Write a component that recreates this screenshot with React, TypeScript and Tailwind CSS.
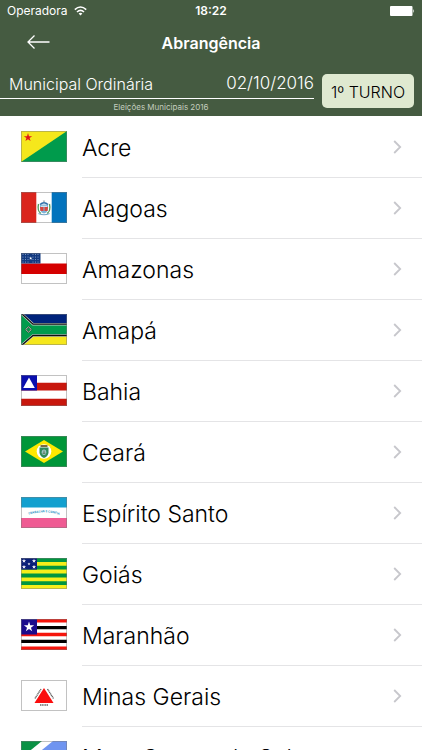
import React from "react";

const star = "M0 -1 L0.225 -0.309 L0.951 -0.309 L0.363 0.118 L0.588 0.809 L0 0.382 L-0.588 0.809 L-0.363 0.118 L-0.951 -0.309 L-0.225 -0.309 Z";

function Star({ x, y, r, fill }: { x: number; y: number; r: number; fill: string }) {
  return <path d={star} fill={fill} transform={`translate(${x} ${y}) scale(${r})`} />;
}

function Acre() {
  return (
    <>
      <rect width="46" height="31" fill="#f5e71c" />
      <path d="M0 31 L46 0 V31 Z" fill="#009b4c" />
      <Star x={7} y={6.5} r={4.4} fill="#e1151b" />
    </>
  );
}

function Alagoas() {
  return (
    <>
      <rect width="46" height="31" fill="#fff" />
      <rect width="15.3" height="31" fill="#da251d" />
      <rect x="30.7" width="15.3" height="31" fill="#0273bd" />
      <path d="M17.5 12 Q16 19 20 21.5 M28.5 12 Q30 19 26 21.5" fill="none" stroke="#4d9a5c" strokeWidth="1.3" />
      <path d="M19 12.5 h8 v5 q-1 3.5 -4 4 q-3 -.5 -4 -4 Z" fill="#7fb4d8" />
      <path d="M19 15 h3.5 v4 h-3 Z M23.5 15 h3.5 l-.5 4 h-3 Z" fill="#d8453d" />
      <path d="M19 12.5 q4 -3.5 8 0" fill="none" stroke="#2b6ea8" strokeWidth="1.6" />
      <path d="M20 14.3 h6" stroke="#fff" strokeWidth=".8" />
      <Star x={23} y={9.3} r={1.4} fill="#8a9fa8" />
      <path d="M17.5 21.5 q5.5 2.5 11 0" fill="none" stroke="#6fa3c4" strokeWidth="1.2" />
    </>
  );
}

function Amazonas() {
  const cols = [2, 4.5, 7, 12, 14.5, 17];
  return (
    <>
      <rect width="46" height="31" fill="#fff" />
      <rect y="10.5" width="46" height="10.5" fill="#d50000" />
      <rect width="19.5" height="10.5" fill="#123a80" />
      {[1.5, 4, 6.5, 9].map((y) =>
        cols.map((x) => <circle key={`${x}-${y}`} cx={x} cy={y} r=".5" fill="#9fb3d6" />)
      )}
      <Star x={9.7} y={5.2} r={1.8} fill="#fff" />
    </>
  );
}

function Amapa() {
  return (
    <>
      <rect width="46" height="31" fill="#009b4c" />
      <path d="M0 0 H46 V10 H12 Z" fill="#00237c" />
      <path d="M0 31 H46 V22 H12 Z" fill="#f5e71c" />
      <path d="M1 0 L12 10.2 H46 M1 31 L12 21.5 H46" fill="none" stroke="#c9d3d0" strokeWidth="2.4" />
      <path d="M1 0 L12 10.2 H46 M1 31 L12 21.5 H46" fill="none" stroke="#111" strokeWidth="1.3" />
      <path d="M7.5 12.8 L10.3 15.5 L7.5 18.2 L4.7 15.5 Z" fill="none" stroke="#23402c" strokeWidth="1.5" />
      <path d="M7.5 12.8 L10.3 15.5 L7.5 18.2 L4.7 15.5 Z" fill="none" stroke="#d7e6d8" strokeWidth=".8" />
    </>
  );
}

function Bahia() {
  return (
    <>
      <rect width="46" height="31" fill="#fff" />
      <path d="M0 7.75 H46 V15.5 H0 Z M0 23.8 H46 V31 H0 Z" fill="#c8170d" />
      <rect width="16" height="15.5" fill="#0a0fae" />
      <path d="M8 2.5 L13.8 13 H2.2 Z" fill="#fff" />
    </>
  );
}

function Ceara() {
  return (
    <>
      <rect width="46" height="31" fill="#009639" />
      <path d="M23 4 L42 15.5 L23 27 L4 15.5 Z" fill="#ffe800" />
      <circle cx="23" cy="15.5" r="7.3" fill="#fff" />
      <path d="M18.5 11.5 h9 v5.5 q-1 4 -4.5 5 q-3.5 -1 -4.5 -5 Z" fill="#2f8a5a" />
      <path d="M19.5 10 h7" stroke="#7a6a44" strokeWidth="2" />
      <ellipse cx="23" cy="16.3" rx="2.3" ry="2.7" fill="#9cc4c8" />
      <path d="M21.5 17.3 h3 M23 14.5 v3" stroke="#4b6d45" strokeWidth=".8" />
    </>
  );
}

function EspiritoSanto() {
  return (
    <>
      <rect width="46" height="31" fill="#fff" />
      <rect width="46" height="10.5" fill="#13a0cf" />
      <rect y="21" width="46" height="10" fill="#ef5b93" />
      <path id="motto" d="M5 19 Q23 11.500 41 19" fill="none" />
      <text className="text-[3px] font-bold" fill="#2f94c5" textAnchor="middle">
        <textPath href="#motto" startOffset="50%">TRABALHA E CONFIA</textPath>
      </text>
    </>
  );
}

function Goias() {
  return (
    <>
      <rect width="46" height="31" fill="#f5ee1a" />
      <path d="M0 0 H46 V3.9 H0 Z M0 7.75 H46 V11.6 H0 Z M0 15.5 H46 V19.4 H0 Z M0 23.25 H46 V27.1 H0 Z" fill="#009640" />
      <rect width="16" height="11.6" fill="#0a2078" />
      <Star x={3} y={3} r={2.2} fill="#fff" />
      <Star x={13} y={3} r={2.2} fill="#fff" />
      <Star x={8} y={6} r={1.6} fill="#fff" />
      <Star x={3} y={9} r={2.2} fill="#fff" />
      <Star x={13} y={9} r={2.2} fill="#fff" />
    </>
  );
}

function Maranhao() {
  return (
    <>
      <rect width="46" height="31" fill="#fff" />
      <path d="M0 0 H46 V3.4 H0 Z M0 13.8 H46 V17.2 H0 Z M0 27.6 H46 V31 H0 Z" fill="#f5150c" />
      <path d="M0 6.9 H46 V10.3 H0 Z M0 20.7 H46 V24.1 H0 Z" fill="#000" />
      <rect width="16" height="15.5" fill="#1b0b8c" />
      <Star x={8} y={8} r={5.4} fill="#fff" />
    </>
  );
}

function MinasGerais() {
  return (
    <>
      <rect width="46" height="31" fill="#fff" />
      <path d="M23 8 L32.5 23 H13.5 Z" fill="#fb0d0d" />
      <path d="M14 18.5 L20 9 M26.5 9 L32.5 18.5 M19 25 H27" stroke="#666" strokeWidth="1.4" strokeDasharray="1.2 .5" />
    </>
  );
}

function MatoGrossoDoSul() {
  return (
    <>
      <rect width="46" height="31" fill="#fff" />
      <path d="M0 0 H21 L0 17 Z" fill="#0a9245" />
      <path d="M32 0 H46 V31 H0 V26 Z" fill="#6f94f0" />
      <Star x={36} y={23} r={4} fill="#f5e71c" />
    </>
  );
}

const states = [
  { name: "Acre", flag: Acre },
  { name: "Alagoas", flag: Alagoas },
  { name: "Amazonas", flag: Amazonas },
  { name: "Amapá", flag: Amapa },
  { name: "Bahia", flag: Bahia },
  { name: "Ceará", flag: Ceara },
  { name: "Espírito Santo", flag: EspiritoSanto },
  { name: "Goiás", flag: Goias },
  { name: "Maranhão", flag: Maranhao },
  { name: "Minas Gerais", flag: MinasGerais },
  { name: "Mato Grosso do Sul", flag: MatoGrossoDoSul },
];

function StatusBar() {
  return (
    <div className="grid h-[22px] grid-cols-3 items-center px-[7px]">
      <div className="flex items-center gap-1.5">
        <span className="text-xs">Operadora</span>
        <svg width="13" height="10" viewBox="0 0 13 10" fill="none" stroke="#fff" strokeWidth="1.6">
          <path d="M.8 3.6 Q6.5 -1.6 12.2 3.6" />
          <path d="M3 6 Q6.5 2.8 10 6" />
          <path d="M6.5 9.5 L4.6 7.6 Q6.5 6 8.4 7.6 Z" fill="#fff" stroke="none" />
        </svg>
      </div>
      <span className="text-center text-xs font-semibold">18:22</span>
      <svg className="justify-self-end" width="25" height="10" viewBox="0 0 25 10" fill="#fff">
        <rect width="22.5" height="10" rx="1" />
        <path d="M23.3 3 q1.7 2 0 4 Z" />
      </svg>
    </div>
  );
}

function Header() {
  return (
    <header className="shrink-0 bg-[#455b41] text-white">
      <StatusBar />
      <div className="grid h-[42px] grid-cols-[64px_1fr_64px] items-center">
        <button type="button" aria-label="Voltar" className="flex justify-center pb-0.5 pl-3">
          <svg width="23" height="14" viewBox="0 0 23 14" fill="none" stroke="#fff" strokeWidth="1.3">
            <path d="M7.5 .5 L1 7 L7.5 13.5 M1 7 H22.5" />
          </svg>
        </button>
        <h1 className="text-center text-base font-semibold">Abrangência</h1>
      </div>
      <div className="flex h-[52px] gap-2 pr-2">
        <div className="flex-1">
          <div className="flex h-[35px] items-center justify-between border-b border-white pt-1.5 pl-[9px] text-base font-light">
            <span>Municipal Ordinária</span>
            <span className="text-[17px]">02/10/2016</span>
          </div>
          <p className="pl-2 text-center text-[8px] leading-4 text-[#c3cdbf]">Eleições Municipais 2016</p>
        </div>
        <button
          type="button"
          className="mt-2.5 h-[34px] w-[92px] rounded-[5px] bg-[#dfe9d0] pt-0.5 text-base font-light text-black"
        >
          1º TURNO
        </button>
      </div>
    </header>
  );
}

export default function App() {
  return (
    <div className="flex h-screen flex-col overflow-hidden bg-white font-['Inter',sans-serif] text-black">
      <Header />
      <ul className="min-h-0 flex-1 overflow-hidden pt-px">
        {states.map(({ name, flag: Flag }) => (
          <li key={name}>
            <a href="#" className="flex h-[61px] pl-[21px]">
              <svg className="mt-3.5" width="46" height="31" viewBox="0 0 46 31" aria-hidden="true">
                <Flag />
                <rect x=".5" y=".5" width="45" height="30" fill="none" stroke="#777" strokeOpacity=".45" />
              </svg>
              <span className="ml-[15px] flex flex-1 items-center justify-between border-b border-[#e4e4e6] pr-5">
                <span className="pt-0.5 text-[23px] font-light">{name}</span>
                <svg width="9" height="14" viewBox="0 0 9 14" fill="none" stroke="#c7c7cc" strokeWidth="1.8">
                  <path d="M1.2 1 L7.2 7 L1.2 13" />
                </svg>
              </span>
            </a>
          </li>
        ))}
      </ul>
    </div>
  );
}
